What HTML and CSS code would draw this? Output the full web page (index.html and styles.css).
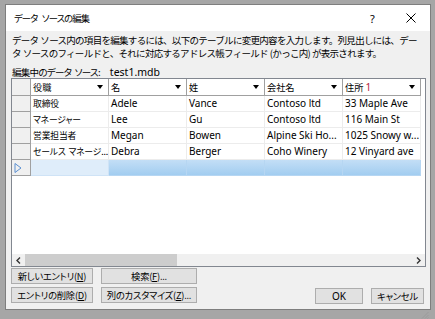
FILE: index.html
```html
<!DOCTYPE html>
<html lang="ja">
<head>
<meta charset="utf-8">
<title>データ ソースの編集</title>
<link rel="stylesheet" href="styles.css">
</head>
<body>
<div class="window">
  <div class="titlebar">
    <span class="title">データ ソースの編集</span>
    <span class="help">?</span>
    <span class="close"><svg width="10" height="10" viewBox="0 0 10 10"><path d="M0.5 0.5 L9.5 9.5 M9.5 0.5 L0.5 9.5" stroke="#000" stroke-width="1"/></svg></span>
  </div>
  <div class="client">
    <p class="desc">データ ソース内の項目を編集するには、以下のテーブルに変更内容を入力します。列見出しには、デー<br>タ ソースのフィールドと、それに対応するアドレス帳フィールド (かっこ内) が表示されます。</p>
    <p class="source">編集中のデータ ソース:<span class="file">test1.mdb</span></p>
    <div class="grid">
      <div class="row head">
        <div class="rh"></div>
        <div class="cell"><span>役職</span><i class="arrow"></i></div>
        <div class="cell"><span>名</span><i class="arrow"></i></div>
        <div class="cell"><span>姓</span><i class="arrow"></i></div>
        <div class="cell"><span>会社名</span><i class="arrow"></i></div>
        <div class="cell"><span>住所 <em class="num">1</em></span><i class="arrow"></i></div>
      </div>
      <div class="row">
        <div class="rh"></div>
        <div class="cell jp">取締役</div>
        <div class="cell">Adele</div>
        <div class="cell">Vance</div>
        <div class="cell">Contoso ltd</div>
        <div class="cell">33 Maple Ave</div>
      </div>
      <div class="row">
        <div class="rh"></div>
        <div class="cell jp">マネージャー</div>
        <div class="cell">Lee</div>
        <div class="cell">Gu</div>
        <div class="cell">Contoso ltd</div>
        <div class="cell">116 Main St</div>
      </div>
      <div class="row">
        <div class="rh"></div>
        <div class="cell jp">営業担当者</div>
        <div class="cell">Megan</div>
        <div class="cell">Bowen</div>
        <div class="cell">Alpine Ski Ho...</div>
        <div class="cell">1025 Snowy w...</div>
      </div>
      <div class="row">
        <div class="rh"></div>
        <div class="cell jp">セールス マネージ...</div>
        <div class="cell">Debra</div>
        <div class="cell">Berger</div>
        <div class="cell">Coho Winery</div>
        <div class="cell">12 Vinyard ave</div>
      </div>
      <div class="row newrow">
        <div class="rh"><svg width="8" height="10" viewBox="0 0 8 10"><path d="M1 0.5 L7 5 L1 9.5 Z" fill="none" stroke="#5b8fd0" stroke-width="1"/></svg></div>
        <div class="cell first"></div>
        <div class="cell sel"></div>
        <div class="cell sel"></div>
        <div class="cell sel"></div>
        <div class="cell sel"></div>
      </div>
      <div class="blank"></div>
      <div class="hscroll">
        <span class="sarrow"><svg width="5" height="7" viewBox="0 0 5 7"><path d="M4 0.5 L1 3.5 L4 6.5" fill="none" stroke="#333" stroke-width="1.4"/></svg></span>
        <span class="track"><span class="thumb"></span></span>
        <span class="sarrow"><svg width="5" height="7" viewBox="0 0 5 7"><path d="M1 0.5 L4 3.5 L1 6.5" fill="none" stroke="#333" stroke-width="1.4"/></svg></span>
      </div>
    </div>
    <div class="buttons">
      <div class="leftbtns">
        <button class="btn w1">新しいエントリ(<u>N</u>)</button>
        <button class="btn w2">検索(<u>F</u>)...</button>
        <button class="btn w1">エントリの削除(<u>D</u>)</button>
        <button class="btn w2">列のカスタマイズ(<u>Z</u>)...</button>
      </div>
      <div class="rightbtns">
        <button class="btn ok">OK</button>
        <button class="btn cancel">キャンセル</button>
      </div>
    </div>
    <span class="grip"><svg width="8" height="8" viewBox="0 0 8 8"><path d="M7.5 1 L1 7.5 M7.5 4 L4 7.5 M7.5 6.5 L6.5 7.5" stroke="#9a9a9a" stroke-width="1"/></svg></span>
  </div>
</div>
</body>
</html>
```

FILE: styles.css
```css
* { box-sizing: border-box; margin: 0; padding: 0; }
html, body { width: 435px; height: 319px; overflow: hidden; }
body {
  background: #a6a6a6;
  padding: 4px 0 0 5px;
  font-family: "Noto Sans CJK JP", sans-serif;
  font-feature-settings: "palt";
  color: #000;
}
.window {
  width: 426px;
  height: 306px;
  border: 1px solid #7e7e7e;
  background: #f0f0f0;
  display: flex;
  flex-direction: column;
}
.titlebar {
  height: 26px;
  background: #fff;
  display: flex;
  align-items: center;
  padding-left: 8px;
  font-size: 9.3px;
  letter-spacing: -0.8px;
}
.title { flex: 1; word-spacing: 3px; }
.help { width: 36px; text-align: left; font-size: 11px; font-family: "Noto Sans", sans-serif; letter-spacing: 0; }
.close { width: 24px; display: flex; align-items: center; }
.client {
  flex: 1;
  position: relative;
  padding: 3px 3px 0 5px;
  display: flex;
  flex-direction: column;
}
.desc {
  font-size: 9.5px;
  font-feature-settings: normal;
  letter-spacing: -0.7px;
  word-spacing: 0.5px;
  line-height: 13px;
  white-space: nowrap;
  padding-left: 1px;
}
.source {
  margin-top: 6px;
  font-size: 9.5px;
  letter-spacing: -0.7px;
  word-spacing: 2px;
  line-height: 12px;
  padding-left: 1px;
  white-space: nowrap;
}
.file { margin-left: 10px; font-family: "Noto Sans", sans-serif; font-size: 10.5px; letter-spacing: 0; }
.grid {
  width: 415px;
  height: 189px;
  border: 1px solid #828790;
  background: #fff;
  display: flex;
  flex-direction: column;
}
.row {
  display: flex;
  height: 16px;
  font-family: "Noto Sans", "Noto Sans CJK JP", sans-serif;
  font-size: 10px;
  line-height: 15px;
}
.row .rh {
  width: 19px;
  height: 16px;
  background: #f0f0f0;
  border-right: 1px solid #a0a0a0;
  border-bottom: 1px solid #a0a0a0;
  display: flex;
  align-items: center;
  padding-left: 2px;
}
.row .cell {
  width: 78px;
  height: 16px;
  border-right: 1px solid #ececec;
  border-bottom: 1px solid #ececec;
  padding-left: 2px;
  white-space: nowrap;
  overflow: hidden;
}
.row .cell.jp { font-family: "Noto Sans CJK JP", sans-serif; font-size: 8.8px; letter-spacing: -0.15px; word-spacing: 1px; }
.row.head { height: 17px; }
.row.head .rh, .row.head .cell { height: 17px; line-height: 16px; }
.row.head .cell {
  border-right-color: #a0a0a0;
  border-bottom-color: #a0a0a0;
  display: flex;
  align-items: center;
  justify-content: space-between;
  padding-right: 5px;
  font-family: "Noto Sans CJK JP", sans-serif;
  font-size: 9.2px;
}
.num { font-style: normal; color: #b3213c; font-family: "Noto Sans", sans-serif; font-size: 10px; }
.arrow {
  width: 0; height: 0;
  border-left: 3.5px solid transparent;
  border-right: 3.5px solid transparent;
  border-top: 4px solid #000;
}
.newrow .cell.first { background: #dfedfa; border-color: #cfe3f6; }
.newrow .cell.sel {
  background: linear-gradient(#c3def6, #a2cdf0);
  border-color: #b6d6f2;
}
.blank { flex: 1; }
.hscroll {
  height: 12px;
  display: flex;
  background: #f0f0f0;
}
.sarrow {
  width: 13px;
  display: flex;
  align-items: center;
  justify-content: center;
}
.track { flex: 1; display: flex; }
.thumb { width: 152px; background: #cdcdcd; }
.buttons {
  display: flex;
  justify-content: space-between;
  align-items: flex-end;
  margin-top: 1px;
  padding-right: 3px;
}
.leftbtns {
  display: grid;
  grid-template-columns: 82px 96px;
  grid-auto-rows: 16px;
  gap: 3px 8px;
}
.rightbtns { display: flex; gap: 8px; margin-bottom: -1px; }
.btn {
  height: 16px;
  background: #e1e1e1;
  border: 1px solid #adadad;
  font-family: "Noto Sans CJK JP", sans-serif;
  font-feature-settings: "palt";
  font-size: 9.3px;
  letter-spacing: -0.25px;
  line-height: 14px;
  color: #000;
  white-space: nowrap;
}
.btn u { text-decoration: underline; }
.ok { width: 48px; font-family: "Noto Sans", sans-serif; font-size: 10px; letter-spacing: 0; }
.cancel { width: 53px; }
.grip { position: absolute; right: 1px; bottom: 1px; width: 8px; height: 8px; }
```
